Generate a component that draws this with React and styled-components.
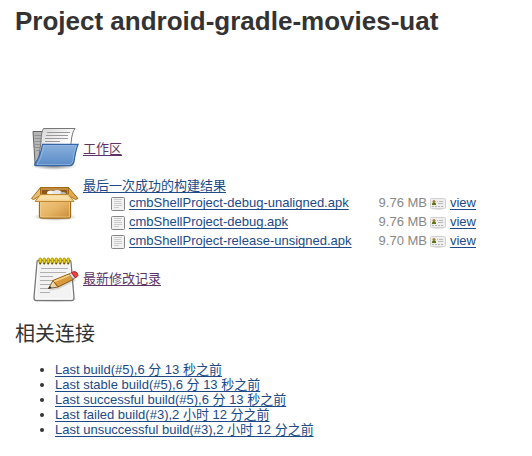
import React from "react";
import styled, { createGlobalStyle } from "styled-components";

const GlobalStyle = createGlobalStyle`
  * { box-sizing: border-box; }
  body {
    margin: 0;
    background: #fff;
    color: #333;
    font-family: "Liberation Sans", Arial, "Noto Sans CJK SC", sans-serif;
    font-size: 13px;
    line-height: 15px;
  }
`;

const Main = styled.main`
  padding: 5px 15px 16px;
`;

const Title = styled.h1`
  margin: 0 0 87px;
  font-size: 26px;
  line-height: 32px;
`;

const Sections = styled.div`
  display: flex;
  flex-direction: column;
  gap: 2px;
  padding-left: 16px;
`;

const Section = styled.section`
  display: flex;
  align-items: ${(p) => (p.$top ? "flex-start" : "center")};
  gap: 4px;
`;

const SectionIcon = styled.svg`
  display: block;
  flex: none;
  width: 48px;
  height: 48px;
`;

const Artifacts = styled.div`
  padding: 4px 0 2px;
`;

const Link = styled.a`
  color: ${(p) => (p.$visited ? "#5c3566" : "#204a87")};
  text-decoration: underline;
  text-underline-offset: 2px;
  text-decoration-thickness: 1px;
  text-decoration-skip-ink: none;
`;

const FileTable = styled.table`
  margin-left: 27px;
  border-collapse: collapse;

  td {
    height: 19px;
    padding: 0;
    white-space: nowrap;
    vertical-align: middle;
  }
`;

const IconCell = styled.td`
  width: 19px;
`;

const SizeCell = styled.td`
  && { padding-left: 27px; }
  color: #888;
`;

const ViewIconCell = styled.td`
  width: 23px;
`;

const SmallIcon = styled.svg`
  display: block;
  width: 16px;
  height: 16px;
`;

const CardIcon = styled(SmallIcon)`
  margin-left: 3px;
`;

const SubTitle = styled.h2`
  margin: 20px 0 16px;
  font-size: 20px;
  font-weight: 400;
  line-height: 24px;
`;

const BuildList = styled.ul`
  margin: 0;
  padding-left: 40px;
`;

function FolderIcon() {
  return (
    <SectionIcon viewBox="0 0 48 48" aria-hidden="true">
      <defs>
        <linearGradient id="folderBlue" x1="0" y1="0" x2="0" y2="1">
          <stop offset="0" stopColor="#89b0dd" />
          <stop offset="1" stopColor="#5a8bc6" />
        </linearGradient>
        <linearGradient id="paper" x1="0" y1="0" x2="1" y2="1">
          <stop offset="0" stopColor="#d2d2d2" />
          <stop offset="0.6" stopColor="#fff" />
        </linearGradient>
        <radialGradient id="shade">
          <stop offset="0" stopColor="#000" stopOpacity="0.5" />
          <stop offset="1" stopColor="#000" stopOpacity="0" />
        </radialGradient>
      </defs>
      <ellipse cx="23" cy="42" rx="23" ry="4" fill="url(#shade)" />
      <path d="M2 7.500h11l1 3h24v31H6Q4 41 4 39Z" fill="#b5b5b5" stroke="#626262" />
      <path d="M3.500 11.500h8M4 14.500h8M4 17.500h7M4 20.500h7M4 23.500h6M5 26.500h4" stroke="#929292" />
      <path d="M12.500 4.500h31.500q-3 3-4 15v6L7 39l3-21q0-10 2.500-13.500Z" fill="url(#paper)" stroke="#777" />
      <path d="M16 8.500h23M15 11.500h22M14 14.500h23M14 17.500h15" stroke="#999" />
      <path d="M11.500 20.500H47q-2.500 6-4 17-1 4-4 4H5q-2 0-1-2 5-6 7.500-19Z" fill="url(#folderBlue)" stroke="#3465a4" strokeWidth="1.300" />
      <path d="M12.500 21.500h33q-3 7-3.500 15-1 4-3 4H6q5-7 6.500-19Z" fill="none" stroke="#b4d0ee" strokeOpacity=".5" />
    </SectionIcon>
  );
}

function BoxIcon() {
  return (
    <SectionIcon viewBox="0 0 48 48" aria-hidden="true">
      <defs>
        <linearGradient id="cardboard" x1="0" y1="0" x2="1" y2="1">
          <stop offset="0" stopColor="#efca83" />
          <stop offset="0.5" stopColor="#e7b567" />
          <stop offset="1" stopColor="#c98b34" />
        </linearGradient>
      </defs>
      <ellipse cx="24" cy="43" rx="22" ry="4" fill="url(#shade)" />
      <path d="M9.500 13.500h28v10h-28Z" fill="#c08a40" stroke="#a56a14" />
      <path d="M11 16h25v5H11Z" fill="#8b5a1b" />
      <ellipse cx="20" cy="19" rx="4" ry="2.500" fill="#f4f4f4" />
      <ellipse cx="26" cy="18.500" rx="4.500" ry="2.500" fill="#e6e6e6" />
      <ellipse cx="32" cy="20" rx="3" ry="2" fill="#bbb" />
      <path d="M8.500 25h31v17q0 2-2 2h-27q-2 0-2-2Z" fill="url(#cardboard)" stroke="#a56a14" strokeWidth="1.300" />
      <path d="M9.500 27v16h29V27" fill="none" stroke="#f9dda1" strokeOpacity=".6" />
      <path d="M9.500 13.500v8l-7 4-2-1Z" fill="#e9bd72" stroke="#a56a14" />
      <path d="M37.500 13.500v8l7 4 2.500-1Z" fill="#e0a950" stroke="#a56a14" />
      <path d="M9.500 20.500h28l5.500 7H4Z" fill="#f2d08c" stroke="#c48a33" />
      <path d="M10 21.500h26l3 4H7Z" fill="#f9dfaa" />
    </SectionIcon>
  );
}

function NotepadIcon() {
  const rings = [8, 12, 16, 20, 24, 28, 32, 36];
  return (
    <SectionIcon viewBox="0 0 48 48" aria-hidden="true">
      <ellipse cx="24" cy="45" rx="23" ry="3" fill="url(#shade)" />
      <path d="M7 6.500h32q1 0 1 2l3 35q0 3-2 3H5q-2 0-2-3l3-35q0-2 1-2Z" fill="#f3f3f3" stroke="#777" strokeWidth="1.300" />
      <path d="M7.500 8h31l3 37h-37Z" fill="none" stroke="#fff" />
      <path d="M10 14.500h27M9 18.500h26M9 22.500h13M9 26.500h25M9 30.500h14M9 34.500h8M9 38.500h10" stroke="#b0b0b0" />
      {rings.map((x) => (
        <g key={x}>
          <rect x={x} y="4" width="2.500" height="5.500" rx="1.200" fill="#edd400" stroke="#a58900" strokeWidth=".8" />
          <circle cx={x + 1.2} cy="9.500" r="1" fill="#665200" />
        </g>
      ))}
      <path d="m18 37 6-6 17-7 5 2-18 9Z" fill="#000" opacity=".12" />
      <path d="m17.500 34.500 4.500-8 5 6.500Z" fill="#ead7b0" stroke="#80602a" />
      <path d="m22 26.500 17-7 4 5.500L27 33Z" fill="#d99a3b" stroke="#8f5902" />
      <path d="m23 27.500 16-6.500" stroke="#f7d08a" strokeWidth="1.500" />
      <path d="m17 35 2-3 1.500 2Z" fill="#222" />
      <path d="m38 20 3-1.500 4 5-3 1.500Z" fill="#ddd" stroke="#888" />
      <path d="m40.500 18.500 2-.8q3-.5 4 2t-.5 3l-2 1Z" fill="#ef4444" stroke="#c41c1c" />
    </SectionIcon>
  );
}

function TextFileIcon() {
  return (
    <SmallIcon viewBox="0 0 16 16" aria-hidden="true">
      <rect x="1.500" y="2.500" width="13" height="13" rx="1" fill="#f2f2f2" stroke="#858585" />
      <path d="M4 4.500h8M4 6.500h7M4 8.500h8M4 10.500h8M4 12.500h5" stroke="#ccc" />
    </SmallIcon>
  );
}

function FingerprintCard() {
  return (
    <CardIcon viewBox="0 0 16 16" aria-hidden="true">
      <ellipse cx="8" cy="13.500" rx="6" ry="1.500" fill="#ddd" />
      <rect x="0.500" y="3.500" width="15" height="10" rx="1" fill="#eee" stroke="#d2d2d2" />
      <circle cx="4" cy="6.500" r="1.500" fill="#a77d32" />
      <path d="M2 10V8.500q2-2 4 0V10Z" fill="#5d7414" />
      <path d="M7 6.500h1M9 6.500h4M8 8.500h5" stroke="#bbb" />
      <path d="M2 11.500h11" stroke="#b5b5b5" strokeDasharray="2 1" />
    </CardIcon>
  );
}

const files = [
  ["cmbShellProject-debug-unaligned.apk", "9.76 MB"],
  ["cmbShellProject-debug.apk", "9.76 MB"],
  ["cmbShellProject-release-unsigned.apk", "9.70 MB"],
];

const builds = [
  "Last build(#5),6 分 13 秒之前",
  "Last stable build(#5),6 分 13 秒之前",
  "Last successful build(#5),6 分 13 秒之前",
  "Last failed build(#3),2 小时 12 分之前",
  "Last unsuccessful build(#3),2 小时 12 分之前",
];

export default function App() {
  return (
    <Main lang="zh-CN">
      <GlobalStyle />
      <Title>Project android-gradle-movies-uat</Title>
      <Sections>
        <Section>
          <FolderIcon />
          <Link href="#workspace" $visited>工作区</Link>
        </Section>
        <Section $top>
          <BoxIcon />
          <Artifacts>
            <Link href="#artifacts">最后一次成功的构建结果</Link>
            <FileTable>
              <tbody>
                {files.map(([name, size]) => (
                  <tr key={name}>
                    <IconCell><TextFileIcon /></IconCell>
                    <td><Link href={`#${name}`}>{name}</Link></td>
                    <SizeCell>{size}</SizeCell>
                    <ViewIconCell><FingerprintCard /></ViewIconCell>
                    <td><Link href={`#${name}-view`}>view</Link></td>
                  </tr>
                ))}
              </tbody>
            </FileTable>
          </Artifacts>
        </Section>
        <Section>
          <NotepadIcon />
          <Link href="#changes" $visited>最新修改记录</Link>
        </Section>
      </Sections>
      <SubTitle>相关连接</SubTitle>
      <BuildList>
        {builds.map((text) => (
          <li key={text}><Link href="#build">{text}</Link></li>
        ))}
      </BuildList>
    </Main>
  );
}
